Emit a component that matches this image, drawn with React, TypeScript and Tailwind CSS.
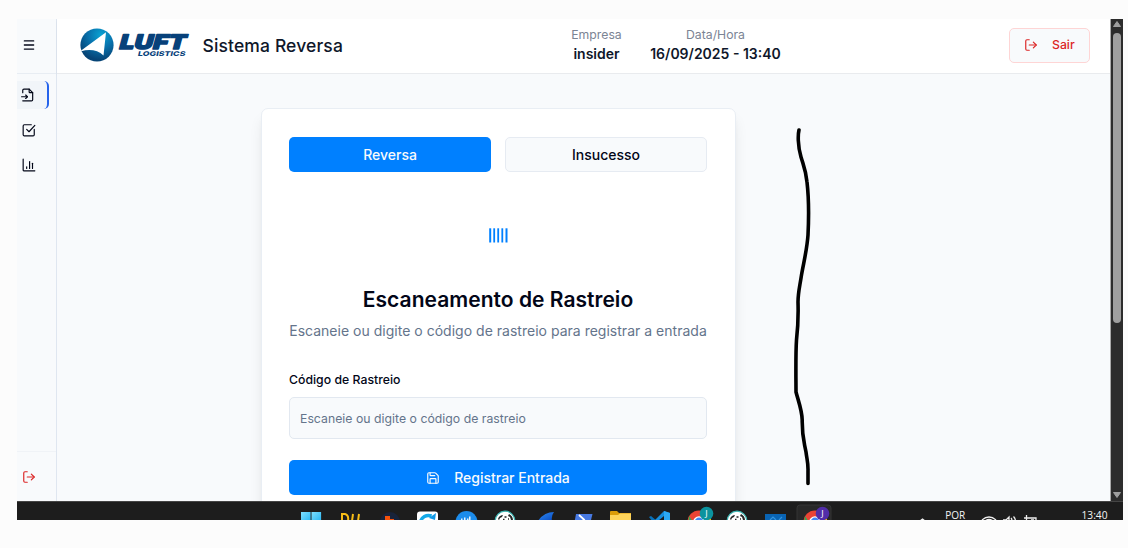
import type { ReactNode } from "react";
import { Menu, LogOut, Save } from "lucide-react";

function Logo() {
  return (
    <svg width="112" height="36" viewBox="0 0 112 36" className="block shrink-0 overflow-visible" aria-label="Luft Logistics">
      <defs>
        <radialGradient id="globe" cx="0.62" cy="0.2" r="0.75">
          <stop offset="0" stopColor="#0aa3d3" />
          <stop offset="0.5" stopColor="#0872ad" />
          <stop offset="1" stopColor="#064476" />
        </radialGradient>
      </defs>
      <circle cx="17" cy="18" r="16.6" fill="url(#globe)" />
      <path d="M1.2 23.500 26 5.200 23.500 28.500C18 23 9.500 22 1.200 24.200Z" fill="#fff" />
      <g transform="translate(38.300 21.600) skewX(-15)">
        <text
          x="0" y="0" textLength="66.500" lengthAdjust="spacingAndGlyphs"
          className="font-['Inter',sans-serif] text-[20px] font-black"
          fill="#07417a" stroke="#07417a" strokeWidth="1.300" strokeLinejoin="round"
        >
          LUFT
        </text>
      </g>
      <g transform="translate(57.500 28.600) skewX(-12)">
        <text
          x="0" y="0" textLength="47.500" lengthAdjust="spacingAndGlyphs"
          className="font-['Inter',sans-serif] text-[6.600px] font-extrabold"
          fill="#07417a"
        >
          LOGISTICS
        </text>
      </g>
    </svg>
  );
}

function NavIcon({ children }: { children: ReactNode }) {
  return (
    <svg
      width="14" height="14" viewBox="0 0 24 24" fill="none" stroke="currentColor"
      strokeWidth="2" strokeLinecap="round" strokeLinejoin="round" className="overflow-visible"
    >
      {children}
    </svg>
  );
}

function Sidebar() {
  return (
    <aside className="flex w-10 shrink-0 flex-col border-r border-[#dfe6f0] bg-[#f8fafc] text-[#020617]">
      <div className="flex h-[55px] shrink-0 items-center border-b border-[#e8edf3] pb-[2px] pl-[5px]">
        <Menu size={14} strokeWidth={2.2} />
      </div>
      <nav className="flex flex-col gap-[7px] pt-[7px]">
        <div className="flex h-7 w-8 items-center rounded-r-[5px] border-r-2 border-[#2563eb] bg-[#f1f5f9] pl-[4px]">
          <NavIcon>
            <path d="M3 8V4a2 2 0 0 1 2-2h9l6 6v12a2 2 0 0 1-2 2H3" />
            <path d="M14 2v5a1 1 0 0 0 1 1h5" />
            <path d="M1 15h10" />
            <path d="m8 18 3-3-3-3" />
          </NavIcon>
        </div>
        <div className="flex h-7 items-center pl-[5px]">
          <NavIcon>
            <path d="M21 11v9a2 2 0 0 1-2 2H4a2 2 0 0 1-2-2V5a2 2 0 0 1 2-2h12" />
            <path d="m8 11 4 4L22 4" />
          </NavIcon>
        </div>
        <div className="flex h-7 items-center pl-[5px]">
          <NavIcon>
            <path d="M2 2v19a1 1 0 0 0 1 1h19" />
            <path d="M8 18v-3" />
            <path d="M13 18V6" />
            <path d="M18 18V9" />
          </NavIcon>
        </div>
      </nav>
      <div className="mt-auto flex h-[50px] items-center border-t border-[#f0f3f7] pl-[5px] text-[#dc2626]">
        <LogOut size={14} />
      </div>
    </aside>
  );
}

function Header() {
  return (
    <header className="flex h-[55px] shrink-0 items-center border-b border-[#e9ebee] bg-white pb-[2px] pl-[23px] pr-5 shadow-xs">
      <div className="flex w-[491px] shrink-0 items-center">
        <Logo />
        <h1 className="ml-[10.500px] whitespace-nowrap pt-[3px] text-[17.500px] font-medium tracking-[0.130px] text-[#0f172a]">Sistema Reversa</h1>
      </div>
      <div className="flex gap-7 pb-[2px] text-center leading-[19px]">
        <div className="w-[51px] whitespace-nowrap">
          <div className="text-[12.250px] text-[#7b8494]">Empresa</div>
          <div className="text-[14px] font-semibold text-[#0f172a]">insider</div>
        </div>
        <div className="flex w-[131px] flex-col items-center whitespace-nowrap">
          <div className="text-[12.250px] text-[#7b8494]">Data/Hora</div>
          <div className="text-[14px] font-semibold text-[#0f172a]">16/09/2025 - 13:40</div>
        </div>
      </div>
      <button className="ml-auto flex h-[35px] w-[81px] items-center rounded-[5px] border border-[#fed5d5] bg-[#f8fafc] pl-[14px] text-[12.250px] font-medium text-[#dc2626]">
        <LogOut size={14} />
        <span className="ml-[14px] pt-px">Sair</span>
      </button>
    </header>
  );
}

function ScanCard() {
  return (
    <section className="h-[440px] w-[475px] rounded-[7px] border border-[#e9eef4] bg-white pl-[27px] pr-7 pt-7 shadow-lg">
      <div className="grid grid-cols-2 gap-[14px] text-[14px] font-medium">
        <button className="h-[35px] rounded-[5px] bg-[#0080ff] text-[#f8fafc]">Reversa</button>
        <button className="h-[35px] rounded-[5px] border border-[#e6ebf2] bg-[#f8fafc] text-[#020617]">Insucesso</button>
      </div>
      <div className="mt-[56px] flex h-[15px] justify-center">
        <svg width="19" height="15" viewBox="0 0 19 15" fill="#0080ff">
          <rect x="0.200" y="0.300" width="2" height="14.200" />
          <rect x="4.300" y="0.300" width="1.800" height="14.200" />
          <rect x="8.300" y="0.300" width="1.800" height="14.200" />
          <rect x="12.400" y="0.300" width="1.800" height="14.200" />
          <rect x="16.500" y="0.300" width="2" height="14.200" />
        </svg>
      </div>
      <h2 className="mt-[43px] whitespace-nowrap text-center text-[21px] font-semibold leading-7 tracking-[0.030px] text-[#020617]">Escaneamento de Rastreio</h2>
      <p className="mt-[6px] whitespace-nowrap text-center text-[14px] leading-[21px] tracking-[0.015px] text-[#64748b]">
        Escaneie ou digite o código de rastreio para registrar a entrada
      </p>
      <label className="mt-[30px] block text-[12.250px] font-medium leading-[18px] tracking-[0.020px] text-[#020617]">Código de Rastreio</label>
      <div className="mt-2 flex h-[42px] items-center rounded-[5px] border border-[#e2e8f0] bg-[#f8fafc] pl-[10px] pt-[2px] text-[12.250px] tracking-[0.020px] text-[#64748b]">
        Escaneie ou digite o código de rastreio
      </div>
      <button className="mt-[21px] flex h-[35px] w-full items-center justify-center gap-[14px] rounded-[5px] bg-[#0080ff] text-[14px] font-medium text-[#f8fafc]">
        <Save size={14} />
        Registrar Entrada
      </button>
    </section>
  );
}

function Chrome({ x, badge }: { x: number; badge: string }) {
  return (
    <g transform={`translate(${x} 0)`}>
      <circle cx="11" cy="21" r="11.500" fill="#ea4335" />
      <path d="M1 15 7 24 0 26Z" fill="#34a853" />
      <path d="M12 16h11v8H12Z" fill="#fbbc05" />
      <circle cx="11" cy="21" r="5.800" fill="#fff" />
      <circle cx="11" cy="21" r="4.400" fill="#4285f4" />
      <circle cx="18.500" cy="12.500" r="6.800" fill={badge} />
      <text x="18.500" y="15.800" textAnchor="middle" fontSize="9" fill="#fff" className="font-['Open_Sans',sans-serif]">J</text>
    </g>
  );
}

function Dog({ x }: { x: number }) {
  return (
    <g transform={`translate(${x} 0)`}>
      <circle cx="10" cy="20" r="9.800" fill="#fff" stroke="#3bb5b2" strokeWidth="1.200" />
      <path d="M3 18c1-3 3-4 5-4l-1 2-2 1-1 2Z M14 13c2 1 4 3 4 6h-2l-1-3-2-1Z" fill="#252525" />
      <path d="M9.500 16h2M8 18.500h1.500M13 18h1" stroke="#252525" strokeWidth="1.300" />
    </g>
  );
}

function Taskbar() {
  return (
    <footer className="h-[19px] shrink-0 overflow-hidden bg-[#1d1d1d]">
      <svg width="1106" height="19" viewBox="17 0 1106 19" className="block">
        <rect x="17" y="0" width="1106" height="1" fill="#454545" />
        <defs>
          <linearGradient id="win" x1="0" y1="0" x2="1" y2="1">
            <stop offset="0" stopColor="#7fe0ff" />
            <stop offset="1" stopColor="#24b4f2" />
          </linearGradient>
          <linearGradient id="fin" x1="0" y1="0" x2="1" y2="1">
            <stop offset="0" stopColor="#2f8df5" />
            <stop offset="1" stopColor="#0848be" />
          </linearGradient>
        </defs>
        <rect x="301" y="11" width="9.600" height="10" fill="url(#win)" />
        <rect x="311.500" y="11" width="9.600" height="10" fill="url(#win)" />
        <g fill="none" stroke="#f8bd16" strokeWidth="2">
          <path d="M341 13h4q4 1 3 7M342 13v7M353 13l-1 7M359 13l-1 7" />
        </g>
        <circle cx="390" cy="21" r="10" fill="#18233a" />
        <path d="M385 15h5v3h4v3h-9Z" fill="#f4510b" />
        <rect x="417" y="10.500" width="21" height="15" rx="3" fill="#fff" />
        <path d="M420.500 21a8 7.500 0 0 1 11-6" fill="none" stroke="#12a9e8" strokeWidth="3.500" />
        <path d="m436 12-1 7-6-2Z" fill="#1298e5" />
        <circle cx="466.500" cy="21" r="11" fill="#1c8ceb" />
        <path d="M461 17.500h1.500v2H461zM464 16.500h1.500v3H464zM467 17.500h1.500v2H467zM469 15.500h1.500v4H469z" fill="#e6f4ff" />
        <Dog x={495} />
        <path d="M538 20q6-9 16-9-3 4-2 9Z" fill="url(#fin)" />
        <path d="M576 13h16.500l-2 8h-16Z" fill="#4779e2" />
        <path d="m579 14 5 4.500-2 2" fill="none" stroke="#fff" strokeWidth="1.800" />
        <path d="M610 11q0-1 1-1h6l2 2h12v5h-21Z" fill="#dc9c08" />
        <path d="M610 14h8l2-1.500h11V21h-21Z" fill="#ffd45a" />
        <path d="m649 16 2-1 6 5h-5Z" fill="#0870b8" />
        <path d="m664 10 6 2v9H653Z" fill="#168cda" />
        <path d="m664 10 6 2v9h-6Z" fill="#2ba8f3" />
        <path d="m664 15-6 5h6Z" fill="#1d1d1d" />
        <Chrome x={688} badge="#0b939e" />
        <Dog x={727} />
        <path d="M765 13h21v8h-21Z" fill="#0964b4" />
        <path d="m770 19 3-3 3 3M779 19l3-3" fill="none" stroke="#3294df" strokeWidth="1.200" />
        <rect x="797" y="4" width="34" height="25" rx="3" fill="#282828" stroke="#343434" />
        <Chrome x={804} badge="#512da8" />
        <path d="m920 20 2.500-2 2.500 2" fill="none" stroke="#eee" strokeWidth="1.300" />
        <g fill="#f4f4f4" className="font-['Open_Sans',sans-serif] text-[10.500px]">
          <text x="945.300" y="18" textLength="20" lengthAdjust="spacingAndGlyphs">POR</text>
          <text x="1081.500" y="17.500" textLength="26" lengthAdjust="spacingAndGlyphs">13:40</text>
        </g>
        <g fill="none" stroke="#eee" strokeWidth="1.300">
          <path d="M982 19q7-6 14 0M985 20q4-3 8 0" />
          <path d="M1003 19h3l3-3v5M1011 17q1 1 1 3M1013.500 15.500q2 2 2 5" />
          <path d="M1024 17h5M1026.500 14v6M1029 17h7v3M1031 19h3" />
        </g>
      </svg>
    </footer>
  );
}

function Scrollbar() {
  return (
    <div className="flex w-[13px] shrink-0 flex-col items-center border-l border-[#a9a9a9] bg-[#2c2c2c]">
      <svg width="12" height="14" viewBox="0 0 12 14" className="shrink-0">
        <path d="M6 2.500 9.500 7.500h-7Z" fill="#9f9f9f" stroke="#9f9f9f" strokeLinejoin="round" />
      </svg>
      <div className="h-[290px] w-2 shrink-0 rounded-full bg-[#9f9f9f]" />
      <svg width="12" height="14" viewBox="0 0 12 14" className="mt-auto shrink-0">
        <path d="M2.500 5.500h7L6 10.500Z" fill="#9f9f9f" stroke="#9f9f9f" strokeLinejoin="round" />
      </svg>
    </div>
  );
}

export default function App() {
  return (
    <div className="h-[548px] w-[1128px] overflow-hidden bg-[#fcfcfc] pl-[17px] pt-[19px] font-['Inter',sans-serif]">
      <div className="relative flex h-[501px] w-[1106px] flex-col overflow-hidden">
        <div className="flex min-h-0 flex-1">
          <Sidebar />
          <div className="flex min-w-0 flex-1 flex-col">
            <Header />
            <main className="min-h-0 flex-1 overflow-hidden bg-[#f8fafc] pl-[204px] pt-[34px]">
              <ScanCard />
            </main>
          </div>
          <Scrollbar />
        </div>
        <Taskbar />
        <svg width="30" height="370" viewBox="787 122 30 370" className="pointer-events-none absolute left-[770px] top-[103px]">
          <path
            d="M799 130C798 134 797.500 145 801 157C804 167 806 171 807 182C808.500 195 809 215 808 235C807 250 803.500 263 801.500 275C799.500 288 798 293 798 302C798.500 318 798 327 796.500 340C795.500 355 796 380 796 392C798 400 802 410 802.200 420C802 437 804 441 806 452C807 460 808.300 463 808 471V483.500"
            fill="none" stroke="#000" strokeWidth="3.600" strokeLinecap="round" strokeLinejoin="round"
          />
        </svg>
      </div>
    </div>
  );
}
